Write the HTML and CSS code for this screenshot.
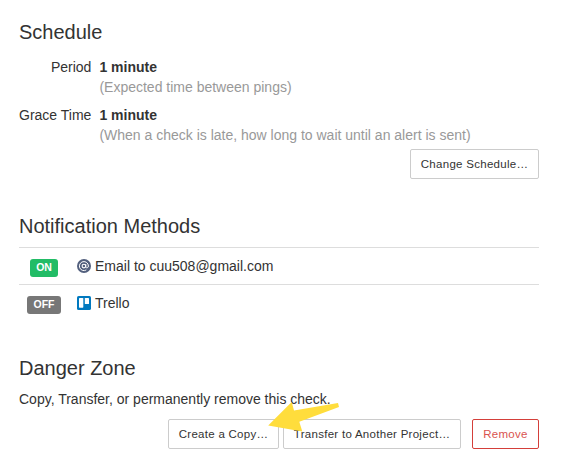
FILE: index.html
```html
<!DOCTYPE html>
<html lang="en">
<head>
<meta charset="utf-8">
<title>Check Details</title>
<link rel="stylesheet" href="styles.css">
</head>
<body>
<section class="schedule">
  <h2>Schedule</h2>
  <dl class="timing">
    <dt>Period</dt>
    <dd><strong>1 minute</strong><span>(Expected time between pings)</span></dd>
    <dt>Grace Time</dt>
    <dd><strong>1 minute</strong><span>(When a check is late, how long to wait until an alert is sent)</span></dd>
  </dl>
  <div class="actions"><button class="btn change">Change Schedule…</button></div>
</section>
<section class="methods">
  <h2>Notification Methods</h2>
  <div class="method">
    <div class="state"><span class="label on">ON</span></div>
    <svg class="icon" viewBox="0 0 14 14"><circle cx="7" cy="7" r="7" fill="#525f7d"/><g fill="none" stroke="#fff"><circle cx="6.9" cy="7.1" r="1.8" stroke-width="1.1"/><path d="M8.8 5.1v2.7c0 1.7 2.6 1.4 2.6-.8A4.5 4.5 0 1 0 9.3 10.9" stroke-width="1"/></g></svg>
    <span>Email to cuu508@gmail.com</span>
  </div>
  <div class="method">
    <div class="state"><span class="label off">OFF</span></div>
    <svg class="icon" viewBox="0 0 14 14"><rect width="14" height="14" rx="1.6" fill="#0079bf"/><rect x="2" y="2" width="4.3" height="9.7" rx=".6" fill="#fff"/><rect x="7.8" y="2" width="4.2" height="6" rx=".6" fill="#fff"/></svg>
    <span>Trello</span>
  </div>
</section>
<section class="danger">
  <h2>Danger Zone</h2>
  <p>Copy, Transfer, or permanently remove this check.</p>
  <div class="actions">
    <div class="copy">
      <button class="btn create">Create a Copy…</button>
      <svg class="arrow" viewBox="268 402 72 30"><path d="M268.2 425.5 291.7 402 294 410.4 338 403.1 339 407.1 299.3 421.7 302.3 431.5Z" fill="#ffdd3c"/></svg>
    </div>
    <button class="btn transfer">Transfer to Another Project…</button>
    <button class="btn remove">Remove</button>
  </div>
</section>
</body>
</html>
```
FILE: styles.css
```css
* { box-sizing: border-box; }
body {
  margin: 0;
  padding: 21px 23px 0 19px;
  background: #fff;
  color: #333;
  font: 14px/20px "Liberation Sans", Arial, sans-serif;
}
h2 { margin: 0; font-size: 20px; font-weight: 400; line-height: 22px; }
.timing {
  display: grid;
  grid-template-columns: 72.4px 1fr;
  gap: 8px;
  margin: 14px 0 0;
}
.timing dt { text-align: right; white-space: nowrap; }
.timing dd { margin: 0; }
.timing strong, .timing span { display: block; }
.timing span { color: #999; }
.actions { display: flex; justify-content: flex-end; margin-top: 4px; }
.btn {
  display: block;
  height: 30px;
  padding: 0;
  border: 1px solid #ccc;
  border-radius: 2px;
  background: #fff;
  color: #333;
  font: 11.5px/18px "Liberation Sans", Arial, sans-serif;
  letter-spacing: .28px;
  text-align: center;
  white-space: nowrap;
}
.change { width: 129px; }
.create { width: 111px; }
.transfer { width: 178px; }
.methods { margin-top: 36px; }
.methods h2 { margin-bottom: 10px; }
.method {
  display: flex;
  align-items: center;
  height: 37px;
  border-top: 1px solid #ddd;
}
.state { width: 50px; margin-right: 8px; }
.label {
  display: block;
  height: 18px;
  margin: 4px auto 0;
  border-radius: 3px;
  color: #fff;
  font-size: 10.5px;
  font-weight: 700;
  line-height: 17px;
  text-align: center;
}
.on { width: 28px; background: #22bc66; }
.off { width: 34px; background: #777; }
.icon { width: 14px; height: 14px; margin: -1px 4px 0 0; }
.danger { margin-top: 36px; }
.danger p { margin: 10px 0 0; }
.danger .actions { margin-top: 10px; }
.copy { position: relative; margin-right: 4px; }
.arrow {
  position: absolute;
  z-index: 1;
  left: 100px;
  top: -17px;
  width: 72px;
  height: 30px;
}
.remove { width: 67px; margin-left: 11px; border-color: #d43f3a; color: #d9534f; }
```
